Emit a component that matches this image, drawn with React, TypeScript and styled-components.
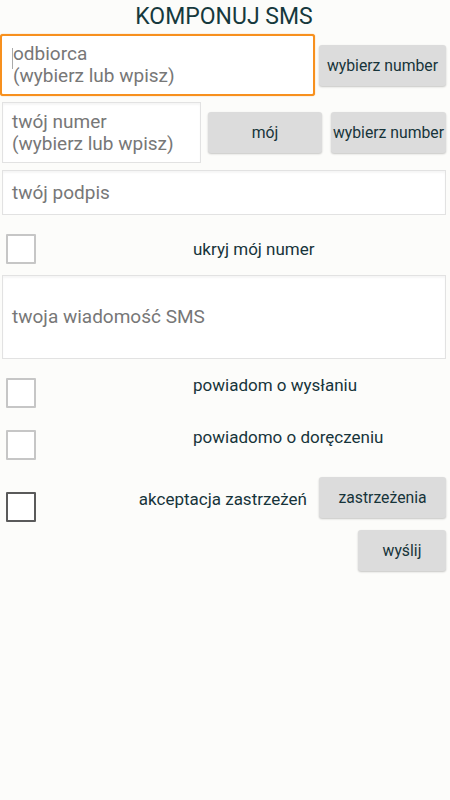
import styled, { createGlobalStyle } from 'styled-components';

const GlobalStyle = createGlobalStyle`
  html, body {
    margin: 0;
    padding: 0;
    background: #fcfcfa;
  }
  body {
    font-family: Roboto, 'Noto Sans', sans-serif;
  }
`;

const Screen = styled.div`
  display: flex;
  flex-direction: column;
  width: 450px;
  height: 800px;
  padding: 0 4px 0 2px;
  box-sizing: border-box;
  background: #fcfcfa;
`;

const Title = styled.h1`
  margin: 0;
  height: 34px;
  text-align: center;
  font: normal 400 23px / 34px Roboto, sans-serif;
  color: #16393d;
`;

const Row = styled.div<{ $top?: number; $align?: string }>`
  display: flex;
  align-items: ${(p) => p.$align || 'center'};
  margin-top: ${(p) => p.$top || 0}px;
`;

const Field = styled.div<{ $width?: number; $height: number; $focused?: boolean }>`
  display: flex;
  align-items: center;
  box-sizing: border-box;
  width: ${(p) => (p.$width ? `${p.$width}px` : '100%')};
  height: ${(p) => p.$height}px;
  padding-left: ${(p) => (p.$focused ? 11 : 9)}px;
  margin-left: ${(p) => (p.$focused ? -2 : 0)}px;
  background: #fff;
  border: ${(p) => (p.$focused ? '2px solid #f7901e' : '1px solid #e2e2e2')};
  border-radius: ${(p) => (p.$focused ? 3 : 0)}px;
  box-shadow: ${(p) => (p.$focused ? '0 0 1px #f7901e' : 'inset 0 2px 2px rgba(0, 0, 0, 0.04)')};
  font-size: 19px;
  line-height: 22px;
  color: #777;
  position: relative;
`;

const Caret = styled.span`
  position: absolute;
  left: 10px;
  top: 12px;
  width: 1px;
  height: 21px;
  background: #aaa;
`;

const Button = styled.button<{ $width: number; $gap?: number }>`
  flex: none;
  width: ${(p) => p.$width}px;
  height: 41px;
  margin-left: ${(p) => p.$gap || 0}px;
  padding: 0;
  border: none;
  border-radius: 3px;
  background: #dcdcdc;
  box-shadow: 0 1px 2px rgba(0, 0, 0, 0.22);
  font: normal 400 15.75px Roboto, sans-serif;
  white-space: nowrap;
  color: #17343a;
  cursor: pointer;
`;

const Checkbox = styled.span<{ $dark?: boolean; $offset?: number }>`
  flex: none;
  display: block;
  box-sizing: border-box;
  width: 30px;
  height: 30px;
  margin: ${(p) => p.$offset || 0}px 0 0 4px;
  border: 2px solid ${(p) => (p.$dark ? '#5a5a5a' : '#c6c6c6')};
  border-radius: 1px;
  background: #fff;
`;

const Label = styled.span<{ $left?: number; $offset?: number }>`
  margin-left: ${(p) => (p.$left !== undefined ? `${p.$left}px` : 'auto')};
  margin-top: ${(p) => p.$offset || 0}px;
  font-size: 17px;
  line-height: 20px;
  color: #17343a;
`;

const Actions = styled.div`
  display: flex;
  justify-content: flex-end;
  margin-top: 8px;
`;

export default function App() {
  return (
    <>
      <GlobalStyle />
      <Screen>
        <Title>KOMPONUJ SMS</Title>

        <Row>
          <Field $width={315} $height={62} $focused>
            <Caret />
            odbiorca
            <br />
            (wybierz lub wpisz)
          </Field>
          <Button $width={127} $gap={4}>
            wybierz number
          </Button>
        </Row>

        <Row $top={6}>
          <Field $width={199} $height={61}>
            twój numer
            <br />
            (wybierz lub wpisz)
          </Field>
          <Button $width={114} $gap={7}>
            mój
          </Button>
          <Button $width={115} $gap={9}>
            wybierz number
          </Button>
        </Row>

        <Row $top={7}>
          <Field $height={45}>twój podpis</Field>
        </Row>

        <Row $top={19}>
          <Checkbox />
          <Label $left={157}>ukryj mój numer</Label>
        </Row>

        <Row $top={11}>
          <Field $height={84}>twoja wiadomość SMS</Field>
        </Row>

        <Row $top={19} $align="flex-start">
          <Checkbox />
          <Label $left={157} $offset={-3}>
            powiadom o wysłaniu
          </Label>
        </Row>

        <Row $top={22} $align="flex-start">
          <Checkbox />
          <Label $left={157} $offset={-3}>
            powiadomo o doręczeniu
          </Label>
        </Row>

        <Row $top={17} $align="flex-start">
          <Checkbox $dark $offset={15} />
          <Label $offset={12}>akceptacja zastrzeżeń</Label>
          <Button $width={127} $gap={12}>
            zastrzeżenia
          </Button>
        </Row>

        <Actions>
          <Button $width={88}>wyślij</Button>
        </Actions>
      </Screen>
    </>
  );
}
